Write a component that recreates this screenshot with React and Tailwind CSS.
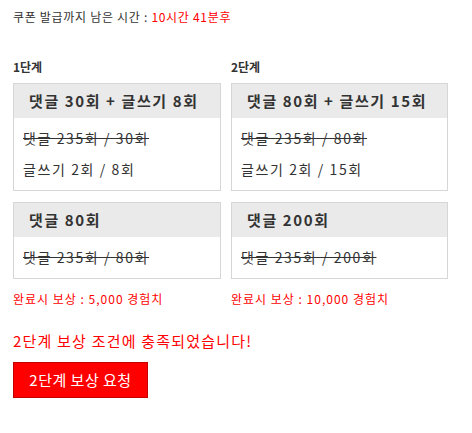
import React from 'react';

const stages = [
  {
    label: '1단계',
    width: 'w-[208px]',
    boxes: [
      {
        title: '댓글 30회 + 글쓰기 8회',
        rows: [
          { text: '댓글 235회 / 30회', done: true },
          { text: '글쓰기 2회 / 8회', done: false },
        ],
      },
      {
        title: '댓글 80회',
        rows: [{ text: '댓글 235회 / 80회', done: true }],
      },
    ],
    reward: '완료시 보상 : 5,000 경험치',
  },
  {
    label: '2단계',
    width: 'w-[217px]',
    boxes: [
      {
        title: '댓글 80회 + 글쓰기 15회',
        rows: [
          { text: '댓글 235회 / 80회', done: true },
          { text: '글쓰기 2회 / 15회', done: false },
        ],
      },
      {
        title: '댓글 200회',
        rows: [{ text: '댓글 235회 / 200회', done: true }],
      },
    ],
    reward: '완료시 보상 : 10,000 경험치',
  },
];

const MissionBox = ({ box }) => (
  <div className="border border-[#d6d6d6] bg-white">
    <div className="h-[34px] bg-[#eaeaea] pl-[15px] flex items-center text-[15px] font-bold tracking-[1.6px] text-[#333]">
      {box.title}
    </div>
    <div className="pt-[5px] pb-[5px] pl-[9px]">
      {box.rows.map((row, i) => (
        <div
          key={i}
          className={`h-[31px] flex items-center text-[14px] tracking-[1.6px] text-[#333] ${row.done ? 'line-through' : ''}`}
        >
          {row.text}
        </div>
      ))}
    </div>
  </div>
);

export default function App() {
  return (
    <div
      className="bg-white min-h-screen pl-[13px] pt-[8px] text-[#333]"
      style={{ fontFamily: '"Noto Sans CJK KR", "Noto Sans", sans-serif' }}
    >
      <div className="text-[12px] leading-[18px] tracking-[0.7px]">
        쿠폰 발급까지 남은 시간 : <span className="text-[#ff0000]">10시간 41분후</span>
      </div>

      {/* Stages */}
      <div className="mt-[32px] flex gap-[10px]">
        {stages.map((stage) => (
          <div key={stage.label} className={stage.width}>
            <div className="text-[12px] leading-[18px] font-bold">{stage.label}</div>
            <div className="mt-[7px] flex flex-col gap-[11px]">
              {stage.boxes.map((box, i) => (
                <MissionBox key={i} box={box} />
              ))}
            </div>
            <div className="mt-[11px] text-[12px] leading-[18px] tracking-[1px] text-[#ff0000]">{stage.reward}</div>
          </div>
        ))}
      </div>

      <div className="mt-[22px] text-[15px] leading-[22px] tracking-[1.2px] text-[#ff0000]">
        2단계 보상 조건에 충족되었습니다!
      </div>

      <button className="mt-[10px] w-[135px] h-[36px] bg-[#ff0000] border border-[#c40000] text-white text-[15px] tracking-[0.5px]">
        2단계 보상 요청
      </button>
    </div>
  );
}
